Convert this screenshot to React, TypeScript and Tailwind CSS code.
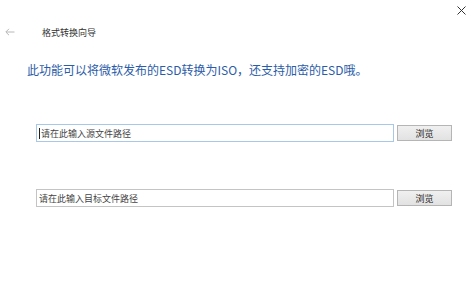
const fontStack = '"Noto Sans CJK SC", "Liberation Sans", sans-serif';

const PathRow = ({ placeholder, focused }: { placeholder: string; focused?: boolean }) => {
  return (
    <div className="flex items-center pl-[36px]">
      <div
        className={
          "flex items-center w-[358px] h-[18px] border bg-white pl-[2px] " +
          (focused ? "border-[#a9c7e6]" : "border-[#c4c4c4]")
        }
      >
        {focused && <span className="w-px h-[11px] bg-[#222] mr-px" />}
        <span className="text-[9px] leading-none text-[#444]">{placeholder}</span>
      </div>
      <button className="ml-[3px] w-[55px] h-[16px] border border-[#b5b5b5] bg-gradient-to-b from-[#f0f0f0] to-[#e2e2e2] text-[9px] leading-none text-[#222]">
        浏览
      </button>
    </div>
  );
};

export default function App() {
  return (
    <div className="w-[471px] h-[294px] bg-white flex flex-col" style={{ fontFamily: fontStack }}>
      <div className="h-[20px] flex justify-end items-center pr-[5px]">
        <svg width="9" height="9" viewBox="0 0 9 9" className="text-[#333]">
          <path d="M0.5 0.5L8.5 8.5M8.5 0.5L0.5 8.5" stroke="currentColor" strokeWidth="1" fill="none" />
        </svg>
      </div>
      <div className="h-[24px] flex items-center">
        <svg width="10" height="8" viewBox="0 0 10 8" className="ml-[5px] text-[#b8b8b8]">
          <path d="M9.5 4H1M4 0.8L0.8 4L4 7.2" stroke="currentColor" strokeWidth="1" fill="none" />
        </svg>
        <span className="ml-[27px] text-[9px] leading-none text-[#333]">格式转换向导</span>
      </div>
      <div className="mt-[18px] pl-[27px] text-[12px] leading-[16px] text-[#2b5ca8]">
        此功能可以将微软发布的ESD转换为ISO，还支持加密的ESD哦。
      </div>
      <div className="mt-[46px]">
        <PathRow placeholder="请在此输入源文件路径" focused />
      </div>
      <div className="mt-[47px]">
        <PathRow placeholder="请在此输入目标文件路径" />
      </div>
    </div>
  );
}
